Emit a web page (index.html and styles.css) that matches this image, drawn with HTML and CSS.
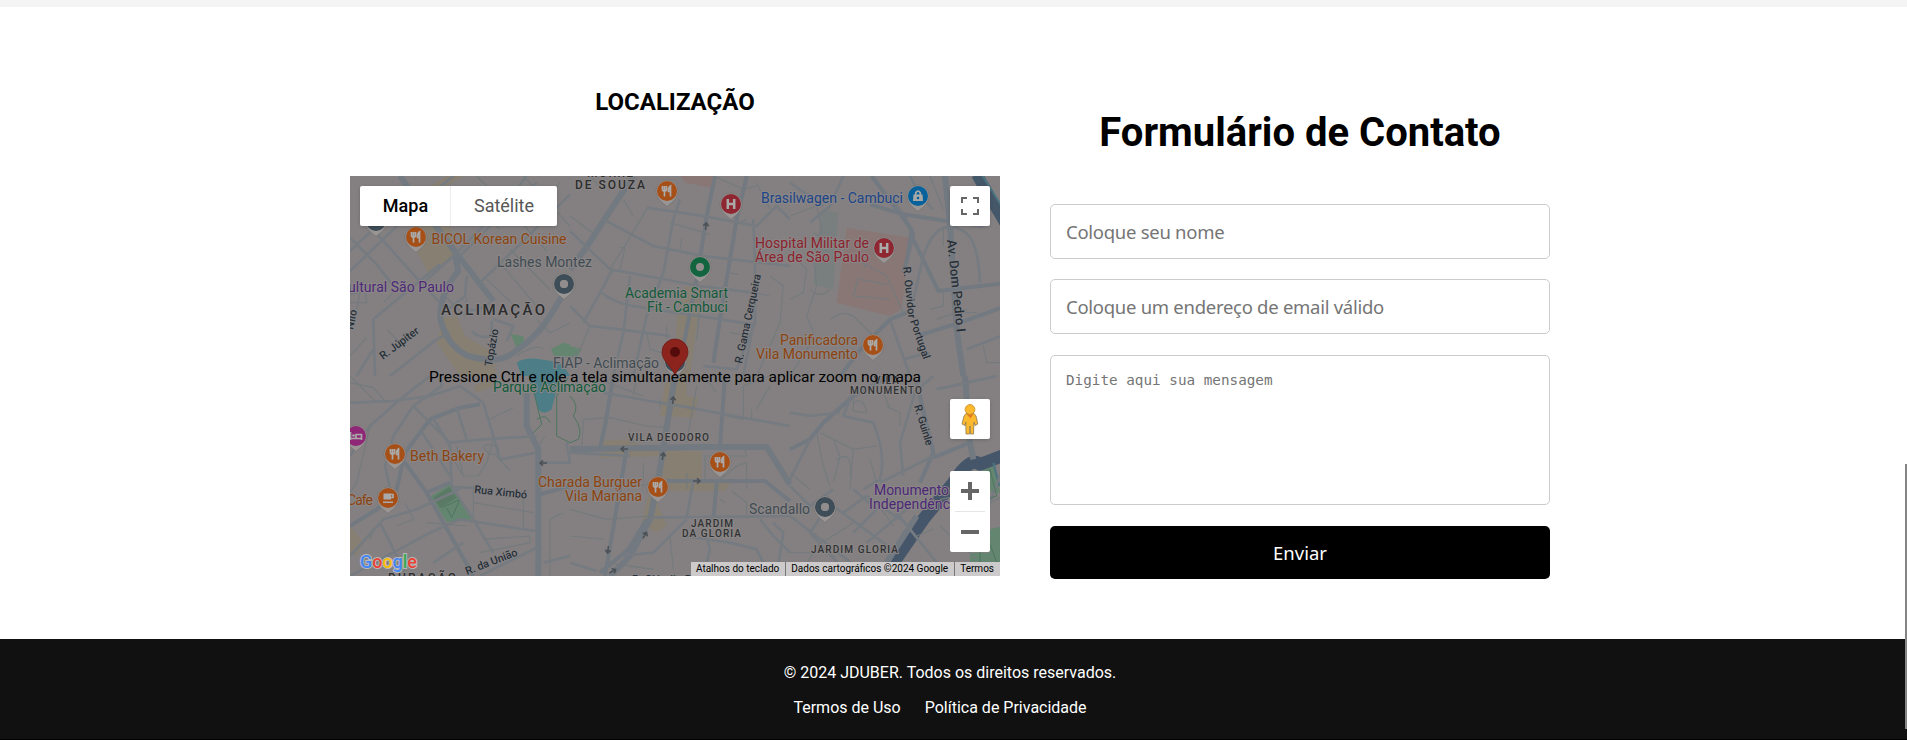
FILE: index.html
```html
<!DOCTYPE html>
<html lang="pt-BR">
<head>
<meta charset="utf-8">
<title>JDUBER - Contato</title>
<link rel="stylesheet" href="styles.css">
</head>
<body>
<main class="contact">
  <section class="location">
    <h2 class="location-title">LOCALIZAÇÃO</h2>
    <div class="map">
      <svg class="map-canvas" viewBox="0 0 650 400" width="650" height="400">
        <defs>
          <g id="drop"><path class="pin-edge" d="M0 15.500C-3 12.500-11 8.500-11 0A11 11 0 0 1 11 0C11 8.500 3 12.500 0 15.500Z"/></g>
          <g id="food"><use href="#drop"/><circle r="10" fill="#a65018"/><path class="glyph" d="M-4.500-5v3.500q0 1.500 2 1.500t2-1.500V-5M-2.500-5V5.500M3.500 5.500V-5Q1.200-3.500 1.500.5H3.500"/></g>
          <g id="hospital"><use href="#drop"/><circle r="10" fill="#8f2732"/><path class="glyph bold" d="M-3.200-5V5M3.200-5V5M-3.200 0H3.200"/></g>
          <g id="place"><use href="#drop"/><circle r="7" fill="none" stroke="#3e4d57" stroke-width="6"/><circle r="4" fill="#918d8c"/></g>
          <path id="arrow" d="M-4 0H3M0-2.700L3 0L0 2.700" fill="none" stroke="#4c5156" stroke-width="1.600"/>
        </defs>
        <rect width="650" height="400" fill="#848081"/>

        <g class="tile" transform="scale(.33333)">
          <path class="commerce" d="M185 75L290 30L340 0H290L175 75ZM215 150L300 145L320 240L235 290L200 225ZM280 425L320 420L345 480L430 530L440 600H330L260 500Z"/>
          <path class="water" d="M500 560Q520 545 560 548L635 560L660 600H515Z"/>
          <path class="park" d="M482 475L520 480L525 510L500 515ZM603 520L640 500L660 505V540L615 545Z"/>
          <path class="r18" d="M150 0L215 95L325 240L430 375M315 235L325 285Q265 360 272 430Q290 510 355 540Q450 565 490 530Q565 480 600 420L640 355L660 340"/>
          <path class="r10" d="M0 285L120 170L220 75L310 0M0 225L70 160M60 150L190 295L270 380M210 330L320 230L470 80L530 0M330 240L440 130L560 20M0 185L80 265L130 330M390 320L520 195L660 55M270 420L345 360L350 300M425 435V480Q390 490 365 465M70 430L270 265M70 430L75 600M420 380Q380 410 350 400M430 430L490 450L470 495M70 520L20 600M120 600L260 490L300 470"/>
          <path class="r5" d="M380 0L470 90L590 225M350 70L450 160M520 0L660 150M410 310L500 395M450 260L560 390M480 220L600 340M0 380H50L45 340M0 355L30 350L20 400M50 485L0 540M110 460L150 500M100 380L130 350M560 430L600 470L660 440M570 70L510 150M630 20L570 100M270 150L350 80M270 345L345 420L350 365M500 540Q560 500 580 520"/>
        </g>
        <g class="tile" transform="translate(220 0) scale(.33333)">
          <path class="hospital-area" d="M330 0H430L425 35L345 20Z"/>
          <path class="commerce" d="M345 330L390 335L385 410L360 600H315L320 420Z"/>
          <path class="park" d="M0 510L35 520L20 545L0 540Z"/>
          <path class="r18" d="M190 0L110 120L45 220L0 280"/>
          <path class="r14" d="M435 0L410 120L380 310L340 510L325 600M530 0L500 130L450 430L430 560"/>
          <path class="r10" d="M100 130L250 210L400 240L660 270M230 95L400 120L560 150L620 90L660 130M0 165L120 280L230 300L390 330L550 350M95 350Q130 380 190 390L550 445L520 600M125 285L90 350L40 440M330 70L310 130L280 290L230 420L190 600M0 390L60 450L150 460L300 480M550 130L555 260V440L500 580L400 570M180 300L160 470L130 600"/>
          <path class="r5" d="M60 0L90 35M230 100L170 200L120 280M0 120L80 180M160 70L190 120M300 140L420 175M330 220L335 185M150 215H165L150 280M480 290L505 295M395 330L380 490M430 0L520 40L560 30M560 20L600 100M490 150L530 130M600 300L640 330L630 440L560 600M60 450L30 520L0 550M230 470L240 520L310 540M290 450V490M480 470L540 480M550 350L600 360"/>
        </g>
        <g class="tile" transform="translate(440 0) scale(.33333)">
          <path fill="#797e7e" d="M95 100L145 110L130 340L70 325Z"/>
          <path class="hospital-area" d="M170 155L360 185L335 400L300 420L140 380Z"/>
          <path class="river" d="M560-5L650 150"/><path class="river-line" d="M575-5L650 115"/>
          <path class="r18" d="M465 0L480 150L500 460L520 600"/>
          <path class="r14" d="M240 85L340 115L470 135L580 150M245 0L365 160L350 260M365 180L445 345L660 320M350 410L300 430L220 510L150 600M340 120L370 175L340 290M380 480L510 440L650 390"/>
          <path class="r10" d="M160 0L120 90L60 140M370 370L400 240Q440 120 520 165Q565 190 570 320M530 520L660 470M0 20L100 90M360 0L390 60L430 100M300 430L360 600M340 550L420 530"/>
          <path class="r5" d="M0 120L80 90L95 160L70 240L80 330L50 420L75 480L0 600M180 240L290 300L340 410M205 305L190 360L300 370M210 310L290 325M240 240L220 280M70 170L120 200M60 340Q90 370 120 340M120 430Q160 400 190 420L250 480M420 400L460 390V340M440 430L530 400M580 510L590 560H640M300 60L340 110M0 230L50 280L40 350L0 370M460 210V150M420 0L460 100M490 410H560"/>
        </g>
        <g class="tile" transform="translate(0 200) scale(.33333)">
          <path class="commerce" d="M370 30L420 10L430 30L380 50ZM0 450L40 500L20 540L0 530Z"/>
          <path class="water" d="M535 0H630L605 100Q580 120 565 100Z"/>
          <path class="park" d="M242 360L300 325L365 430L290 438Z"/>
          <path d="M250 365L298 333L320 365L270 395Z" fill="#4f7059" opacity=".5"/>
          <path class="trail" d="M275 395L330 370L305 425L290 395M550 40L575 145L540 180M655 5L620 60V180L660 200M560 130Q590 110 600 140"/>
          <path class="r18" d="M530 50V150L565 220V600"/>
          <path class="r14" d="M0 450L80 400L105 380M105 390L140 340L165 230L240 130L330 95L390 85M165 260L230 350L370 600M230 350L300 320M570 355L660 330"/>
          <path class="r10" d="M270 0L275 30L190 90L130 180L105 270L130 380M240 0L150 70L60 150L0 240M0 80L130 75L240 60L330 30L400 80L430 180L450 250L560 230M190 90L300 200L400 190L560 180M245 120L300 210L305 330L370 430L430 530M0 540L100 430L200 400L330 340M90 440L170 600M0 600L240 470L330 430L555 465M305 335H380M210 160L300 300M320 95L350 190M570 510L390 600M560 260H660L650 200M580 560L660 540M340 500L250 560"/>
          <path class="r5" d="M0 20L70 35L110 80M60 150L20 320L0 350M0 0L80 80M320 210L340 300H385L410 260L430 190M340 300L310 250M420 130L490 95M370 330V420M370 380L550 410M440 240L480 285M400 210Q420 200 445 215V235Q410 240 400 210M520 340V460M300 330L420 340M600 600V430L640 410M165 380L190 430L140 450M60 490L70 460M390 530L540 500V480L400 490M585 180L560 220M230 440L350 450"/>
        </g>
        <g class="tile" transform="translate(220 200) scale(.33333)">
          <path class="commerce" d="M285 20L350 0V60L385 65L370 125L270 120ZM95 195L170 190L260 225H395V310L480 320L465 345L245 345L290 450L260 470L215 445L230 370L260 330L270 240L90 245Z"/>
          <path class="r18" d="M0 220L400 213H590L660 325M315 0L265 310L240 430L180 540L120 600"/>
          <path class="r14" d="M130 0L105 150L90 215M170 220L105 600M270 315H585L660 375M465 0L450 210M440 320L430 430M90 590L175 520L230 430"/>
          <path class="r10" d="M100 50L240 75L360 95L490 120L660 150M240 425L660 420M350 430L250 530L150 540M370 315L350 425M570 430L610 480L660 530M400 600L420 520L395 430M340 480L480 500L560 520L600 600M620 600L640 470L610 440M0 230L180 240M80 585L0 560"/>
          <path class="r5" d="M40 130L120 125L230 150L300 155M200 0L190 60M380 30L350 200M470 120L520 130V30L600 0M545 100V130M600 30L560 100M400 0L440 50M110 20L220 60M270 100V70M40 130L35 230M180 160V200L220 180M220 260V320M180 330L245 325M450 370L465 380M405 310V240H530L520 210M350 340V290M485 345L530 380V420M0 400L110 430L240 420M300 480L310 580M110 560L250 580M530 260V340M450 310L500 270L530 260M0 480L100 490"/>
          <path class="trail" d="M0 60Q30 90 10 120Q40 160 25 190L0 200"/>
        </g>
        <g class="tile" transform="translate(440 200) scale(.33333)">
          <path class="park" d="M600 460L640 450V570H540V530H600ZM575 280L610 260L630 350L605 350Z"/>
          <path class="river wide" d="M290 590L400 430L490 320Q540 240 570 265L650 235"/>
          <path class="river-line" d="M610 260L628 330"/>
          <path class="r18" d="M525 0L540 200L550 250M290 560L380 420"/>
          <path class="r14" d="M0 220L60 190L100 140L190 60L300 0M380 20L430 230L390 320M430 245L540 200M540 70L480 150"/>
          <path class="r10" d="M0 110L60 120L150 110M60 190L0 310M180 70L160 120L250 140Q290 240 270 310L220 340M0 330L60 390L130 340M130 390L320 530M120 380L60 470L180 600M0 420L210 580M190 340L260 400L190 470M160 410L230 360L330 430M230 500L350 400M270 320L430 240M390 0L330 200L340 300M640 270L600 380L580 450M430 0L360 60M440 40L620 0M320 410L440 560"/>
          <path class="r5" d="M90 170L130 190L190 220L260 210M190 220L180 340M130 190L150 240L130 320M140 250Q190 220 180 300M290 90L330 110V150M300 100L280 50M190 80Q220 60 230 110L190 105V70M0 290L60 340M120 330L100 270L80 170M260 380L310 450M240 250L260 320M450 450L560 550M380 480L430 460M560 400L640 360M0 530H80M30 600L80 510L190 440M450 370L560 350"/>
          <path class="trail" d="M570 300L600 280L620 360L590 370M570 500V560M590 475L620 560"/>
        </g>

        <use href="#arrow" transform="translate(356 50) rotate(-83)"/>
        <use href="#arrow" transform="translate(323 224) rotate(-85)"/>
        <use href="#arrow" transform="translate(313 280) rotate(-80)"/>
        <use href="#arrow" transform="translate(274 273) rotate(180)"/>
        <use href="#arrow" transform="translate(347 305)"/>
        <use href="#arrow" transform="translate(258 374) rotate(97)"/>
        <use href="#arrow" transform="translate(295 359) rotate(-60)"/>
        <use href="#arrow" transform="translate(263 395) rotate(-30)"/>
        <use href="#arrow" transform="translate(193 287) rotate(180)"/>

        <use href="#place" x="26" y="45"/>
        <use href="#food" x="66" y="61"/>
        <use href="#place" x="214" y="108"/>
        <use href="#food" x="317" y="15"/>
        <use href="#hospital" x="381" y="28"/>
        <g transform="translate(350 91)"><use href="#drop"/><circle r="7" fill="#918d8c" stroke="#12653f" stroke-width="6"/></g>
        <g transform="translate(568 20)"><use href="#drop"/><circle r="10" fill="#07629c"/><path d="M-4.500-1.500H4.500L5 5H-5Z" fill="#a8a8a8"/><path class="glyph" d="M-2.300-1V-3Q0-7 2.300-3V-1"/><circle cy="2" r="1.300" fill="#07629c"/></g>
        <use href="#hospital" x="534" y="72"/>
        <use href="#food" x="523" y="169"/>
        <use href="#food" x="45" y="278"/>
        <g transform="translate(6 260)"><use href="#drop"/><circle r="10" fill="#8e2775"/><path class="glyph" d="M-5.500-4V4M-5 2.500H5.500V-1.500H0V2M5.500 4V1"/><circle cx="-2.500" cy="-.5" r="1.300" fill="#aaa"/></g>
        <g transform="translate(38 322)"><use href="#drop"/><circle r="10" fill="#a65018"/><path d="M-4.500-4.500H3V1.500H-4.500ZM-5 3.500H5V5H-5Z" fill="#aaa"/><path class="glyph" d="M3-3.500H5V-.5H3"/></g>
        <use href="#food" x="308" y="311"/>
        <use href="#food" x="370" y="286"/>
        <use href="#place" x="475" y="331"/>
        <use href="#place" x="325" y="186"/>

        <g class="labels">
          <g class="orange">
            <text x="81.500" y="68" textLength="135">BICOL Korean Cuisine</text>
            <text x="60" y="285" textLength="74">Beth Bakery</text>
            <text x="-3" y="329" textLength="26">Cafe</text>
            <text x="188" y="311" textLength="104">Charada Burguer</text>
            <text x="215" y="325" textLength="77">Vila Mariana</text>
            <text x="430" y="169" textLength="78">Panificadora</text>
            <text x="406" y="183" textLength="102">Vila Monumento</text>
          </g>
          <g class="slate">
            <text x="147" y="91" textLength="95">Lashes Montez</text>
            <text x="203" y="192" textLength="106">FIAP - Aclimação</text>
            <text x="399" y="338" textLength="61">Scandallo</text>
          </g>
          <g class="violet">
            <text x="-2" y="116" textLength="106">ultural São Paulo</text>
            <text x="524" y="319" textLength="75">Monumento</text>
            <text x="519" y="333" textLength="81">Independênc</text>
          </g>
          <g class="green">
            <text x="275" y="122" textLength="103">Academia Smart</text>
            <text x="297" y="136" textLength="81">Fit - Cambuci</text>
            <text x="143" y="216" textLength="113">Parque Aclimação</text>
          </g>
          <text class="blue" x="411" y="27" textLength="142">Brasilwagen - Cambuci</text>
          <g class="red">
            <text x="405" y="72" textLength="114">Hospital Militar de</text>
            <text x="405" y="86" textLength="114">Área de São Paulo</text>
          </g>
          <g class="district">
            <text x="237" y="1" textLength="46">MORRE</text>
            <text x="225" y="13" textLength="70">DE SOUZA</text>
            <text class="large" x="91" y="139" textLength="104">ACLIMAÇÃO</text>
            <text x="38" y="406" textLength="68">DURAÇÃO</text>
          </g>
          <g class="hood">
            <text x="278" y="265" textLength="81">VILA DEODORO</text>
            <text x="341" y="351" textLength="42">JARDIM</text>
            <text x="332" y="361" textLength="59">DA GLORIA</text>
            <text x="524" y="208" textLength="25">VILA</text>
            <text x="500" y="218" textLength="72">MONUMENTO</text>
            <text x="461" y="377" textLength="87">JARDIM GLORIA</text>
          </g>
          <g class="street">
            <text transform="translate(33 184) rotate(-37)" textLength="46">R. Júpiter</text>
            <text transform="translate(142 191) rotate(-80)" textLength="38">Topázio</text>
            <text transform="translate(3 154) rotate(-78)" textLength="20">Nilo</text>
            <text transform="translate(392 188) rotate(-78)" textLength="91">R. Gama Cerqueira</text>
            <text transform="translate(553 91) rotate(84)" textLength="52">R. Ouvidor</text>
            <text transform="translate(560 145) rotate(71)" textLength="41">Portugal</text>
            <text class="avenue" transform="translate(597 64) rotate(84)" textLength="93">Av. Dom Pedro I</text>
            <text transform="translate(564 230) rotate(73)" textLength="42">R. Guinle</text>
            <text transform="translate(124 317) rotate(6)" textLength="53">Rua Ximbó</text>
            <text transform="translate(117 399) rotate(-21)" textLength="55">R. da União</text>
            <text x="282" y="407" textLength="80">R. Cláudio Rossi</text>
          </g>
        </g>

        <path d="M325 200C323 191 312 186 312 176A13 13 0 0 1 338 176C338 186 327 191 325 200Z" fill="#8c241d" stroke="#711b18" stroke-width=".8"/>
        <circle cx="325" cy="176" r="5" fill="#540b0c"/>

        <text class="hint" x="79" y="205.500" textLength="492">Pressione Ctrl e role a tela simultaneamente para aplicar zoom no mapa</text>

        <text class="google" x="10" y="392" textLength="57" lengthAdjust="spacingAndGlyphs"><tspan fill="#4285f4">G</tspan><tspan fill="#ea4335">o</tspan><tspan fill="#fbbc05">o</tspan><tspan fill="#4285f4">g</tspan><tspan fill="#34a853">l</tspan><tspan fill="#ea4335">e</tspan></text>
      </svg>

      <div class="map-type"><span class="map-type-item active">Mapa</span><span class="map-type-item">Satélite</span></div>
      <div class="map-button fullscreen"><svg width="18" height="18" viewBox="0 0 18 18"><path d="M1 6V1H6M12 1H17V6M17 12V17H12M6 17H1V12" fill="none" stroke="#666" stroke-width="2"/></svg></div>
      <div class="map-button pegman"><svg width="18" height="31" viewBox="0 0 18 31"><path d="M5 9.500H13L15 12L16.800 20L14 21.500L13 18L12.500 30H9.500L9 22L8.500 30H5L4.800 18L4 21.500L1 20L3 12Z" fill="#fcb92e" stroke="#8a7950" stroke-width=".8"/><path d="M5.500 10H12.500L9.500 14.500Z" fill="#e37b20"/><circle cx="9" cy="5.500" r="4.900" fill="#fcb92e" stroke="#c58b26" stroke-width=".8"/></svg></div>
      <div class="zoom-control">
        <svg width="18" height="18" viewBox="0 0 18 18"><path d="M0 9H18M9 0V18" stroke="#666" stroke-width="4"/></svg>
        <span class="zoom-line"></span>
        <svg width="18" height="18" viewBox="0 0 18 18"><path d="M0 9H18" stroke="#666" stroke-width="4"/></svg>
      </div>
      <div class="map-legal"><span>Atalhos do teclado</span><span>Dados cartográficos ©2024 Google</span><span>Termos</span></div>
    </div>
  </section>
  <section class="form-column">
    <h1 class="form-title">Formulário de Contato</h1>
    <form class="form">
      <input class="field" type="text" placeholder="Coloque seu nome">
      <input class="field" type="email" placeholder="Coloque um endereço de email válido">
      <textarea class="field message" placeholder="Digite aqui sua mensagem"></textarea>
      <button class="submit" type="button">Enviar</button>
    </form>
  </section>
</main>
<footer class="footer">
  <p class="copyright">© 2024 JDUBER. Todos os direitos reservados.</p>
  <nav class="footer-links"><a href="#">Termos de Uso</a><a href="#">Política de Privacidade</a></nav>
</footer>
<div class="scroll-thumb"></div>
</body>
</html>
```

FILE: styles.css
```css
* { box-sizing: border-box; }
html { background: #000; overflow: hidden; }
body { margin: 0; font-family: Roboto, "Liberation Sans", sans-serif; color: #000; background: #fff; }

.contact {
  display: flex;
  gap: 50px;
  height: 639px;
  padding: 0 7px 0 0;
  border-top: 7px solid #f4f4f4;
  justify-content: center;
}
.location { width: 650px; padding-top: 81px; }
.location-title { margin: 0 0 60px; font-size: 24px; line-height: 28px; font-weight: 700; text-align: center; }

.map { position: relative; width: 650px; height: 400px; overflow: hidden; }
.map-canvas { display: block; }
.tile path { stroke-linejoin: round; }
.r18, .r14, .r10, .r5, .trail { fill: none; stroke: #727980; }
.r18 { stroke-width: 18; }
.r14 { stroke-width: 12; }
.r10 { stroke-width: 8; stroke: #757b80; }
.r5 { stroke-width: 3.500; stroke: #747a7d; }
.trail { stroke: #4d755f; stroke-width: 3; }
.commerce { fill: #867f72; }
.water { fill: #4d7d87; }
.park { fill: #648570; }
.hospital-area { fill: #897776; }
.river { fill: none; stroke: #45586a; stroke-width: 34; }
.river.wide { stroke-width: 38; stroke: #46566a; }
.river-line { fill: none; stroke: #4a7480; stroke-width: 6; }

.pin-edge { fill: #999594; stroke: #706d6d; stroke-width: .6; }
.glyph { fill: none; stroke: #aaa; stroke-width: 1.700; }
.glyph.bold { stroke-width: 2.500; }

.labels text { font-size: 14px; paint-order: stroke; stroke: #8b8787; stroke-width: 2px; stroke-linejoin: round; }
.orange { fill: #8c430f; }
.slate { fill: #3f4b53; }
.violet { fill: #4b2878; }
.green { fill: #125a3b; }
.blue { fill: #1a4488; }
.red { fill: #8c222d; }
.labels .district text { font-size: 12px; font-weight: 500; fill: #2b2c2d; }
.labels .district .large { font-size: 15px; }
.labels .hood text { font-size: 10px; font-weight: 500; fill: #303234; }
.labels .street text { font-size: 11px; font-weight: 500; fill: #26303a; stroke-width: 1px; }
.labels .street .avenue { font-size: 13px; }
.hint { font-size: 15.500px; fill: #000; }
.google { font-family: Roboto, sans-serif; font-size: 19px; font-weight: 500; paint-order: stroke; stroke: #b9b9b9; stroke-width: 2px; }

.map-type { position: absolute; left: 10px; top: 10px; display: flex; height: 40px; background: #fff; border-radius: 2px; box-shadow: 0 1px 4px -1px rgba(0,0,0,.3); }
.map-type-item { width: 107px; padding-left: 1px; font-size: 18px; line-height: 40px; text-align: center; color: #565656; }
.map-type-item.active { width: 90px; color: #000; font-weight: 500; box-shadow: 1px 0 0 #ececec; }
.map-button { position: absolute; right: 10px; display: flex; align-items: center; justify-content: center; width: 40px; height: 40px; background: #fff; border-radius: 2px; box-shadow: 0 1px 4px -1px rgba(0,0,0,.3); }
.fullscreen { top: 10px; }
.pegman { top: 223px; }
.zoom-control { position: absolute; right: 10px; top: 295px; display: flex; flex-direction: column; align-items: center; gap: 11px; width: 40px; height: 81px; padding-top: 11px; background: #fff; border-radius: 2px; }
.zoom-line { width: 30px; height: 1px; background: #e6e6e6; }
.map-legal { position: absolute; right: 0; bottom: 0; display: flex; height: 14px; background: #cccaca; font-size: 10px; line-height: 14px; white-space: nowrap; }
.map-legal span { padding: 0 6px 0 5px; }
.map-legal span + span { border-left: 1px solid #777; }

.form-column { width: 500px; padding-top: 102px; }
.form-title { margin: 0 0 48px; font-size: 40px; line-height: 47px; font-weight: 700; text-align: center; }
.form { display: flex; flex-direction: column; }
.field {
  display: block;
  width: 500px;
  height: 55px;
  margin: 0 0 20px;
  padding: 0 15px;
  border: 1px solid #ccc;
  border-radius: 5px;
  background: #fff;
  font-family: "Noto Sans", sans-serif;
  font-size: 18.500px;
  letter-spacing: -.28px;
  outline: 0;
}
.field::placeholder { color: #757575; opacity: 1; }
.message { height: 150px; margin-bottom: 21px; margin-top: 1px; padding: 15px; font-family: "DejaVu Sans Mono", monospace; font-size: 14.300px; letter-spacing: 0; line-height: 19px; resize: none; }
.submit { height: 53px; padding: 0; border: 0; border-radius: 5px; background: #000; color: #fff; font-family: "Noto Sans", sans-serif; font-size: 18.500px; }

.footer { height: 100px; padding: 20px 7px 0 0; background: #111; color: #fff; text-align: center; font-size: 16px; }
.copyright { margin: 0; line-height: 27px; }
.footer-links { display: flex; justify-content: center; gap: 24px; padding: 8px 20px 0 0; line-height: 27px; }
.footer-links a { color: #fff; text-decoration: none; }
.scroll-thumb { position: absolute; right: 0; top: 464px; width: 2px; height: 265px; background: #858585; }
```
